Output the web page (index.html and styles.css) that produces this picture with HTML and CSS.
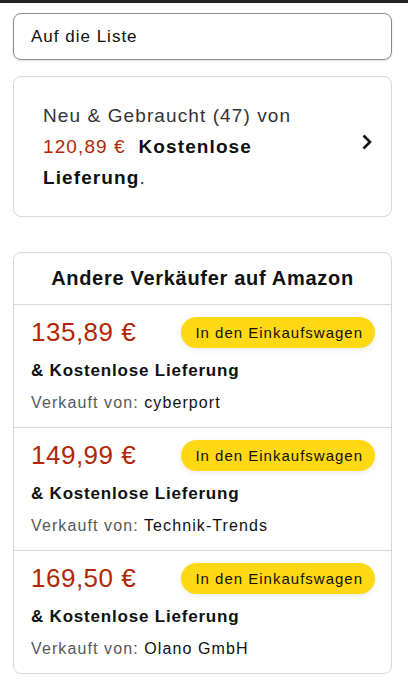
FILE: index.html
```html
<!DOCTYPE html>
<html lang="de">
<head>
  <meta charset="UTF-8">
  <meta name="viewport" content="width=device-width, initial-scale=1.0">
  <title>Angebote</title>
  <link rel="stylesheet" href="styles.css">
</head>
<body>
  <div class="topbar"></div>

  <div class="page">
    <div class="list-box">Auf die Liste</div>

    <a class="offers-card" href="#">
      <p class="offers-text">Neu &amp; Gebraucht (47) von <span class="price-inline">120,89 €</span>&nbsp; <b>Kostenlose</b> <b>Lieferung</b>.</p>
      <svg class="chevron" width="12" height="18" viewBox="0 0 12 18">
        <path d="M2.5 2.5 L9 9 L2.5 15.5" fill="none" stroke="#111" stroke-width="2.6"/>
      </svg>
    </a>

    <div class="sellers">
      <h3 class="sellers-title">Andere Verkäufer auf Amazon</h3>

      <div class="seller">
        <div class="seller-top">
          <span class="price">135,89 €</span>
          <button class="cart-btn" type="button">In den Einkaufswagen</button>
        </div>
        <div class="delivery">&amp; Kostenlose Lieferung</div>
        <div class="sold-by"><span class="label">Verkauft von:</span> cyberport</div>
      </div>

      <div class="seller">
        <div class="seller-top">
          <span class="price">149,99 €</span>
          <button class="cart-btn" type="button">In den Einkaufswagen</button>
        </div>
        <div class="delivery">&amp; Kostenlose Lieferung</div>
        <div class="sold-by"><span class="label">Verkauft von:</span> Technik-Trends</div>
      </div>

      <div class="seller">
        <div class="seller-top">
          <span class="price">169,50 €</span>
          <button class="cart-btn" type="button">In den Einkaufswagen</button>
        </div>
        <div class="delivery">&amp; Kostenlose Lieferung</div>
        <div class="sold-by"><span class="label">Verkauft von:</span> Olano GmbH</div>
      </div>
    </div>
  </div>
</body>
</html>
```

FILE: styles.css
```css
body {
  margin: 0;
  font-family: "Liberation Sans", Arial, sans-serif;
  background-color: #fff;
  color: #0f1111;
}

.topbar {
  height: 3px;
  background-color: #232323;
}

.page {
  padding: 10px 16px 0 13px;
}

.list-box {
  height: 45px;
  border: 1px solid #888c8c;
  border-radius: 8px;
  box-shadow: 0 1px 2px rgba(15, 17, 17, 0.15);
  padding: 0 17px;
  display: flex;
  align-items: center;
  font-size: 17px;
  letter-spacing: 1px;
  color: #0f1111;
}

.offers-card {
  margin-top: 16px;
  height: 139px;
  border: 1px solid #d5d9d9;
  border-radius: 8px;
  display: flex;
  align-items: center;
  justify-content: space-between;
  padding: 0 18px 0 29px;
  text-decoration: none;
  color: #0f1111;
}

.offers-text {
  margin: 0;
  width: 285px;
  font-size: 19px;
  letter-spacing: 1.1px;
  line-height: 31px;
  color: #333;
}

.offers-text b {
  color: #0f1111;
}

.price-inline {
  color: #b12704;
}

.chevron {
  flex-shrink: 0;
  margin-bottom: 10px;
}

.sellers {
  margin-top: 35px;
  border: 1px solid #d5d9d9;
  border-radius: 8px;
}

.sellers-title {
  margin: 0;
  height: 51px;
  display: flex;
  align-items: center;
  justify-content: center;
  font-size: 20px;
  letter-spacing: 0.7px;
  font-weight: bold;
  color: #0f1111;
  border-bottom: 1px solid #d5d9d9;
}

.seller {
  padding: 12px 16px 0 17px;
  height: 110px;
  border-bottom: 1px solid #d5d9d9;
}

.seller:last-child {
  border-bottom: none;
}

.seller-top {
  display: flex;
  justify-content: space-between;
  align-items: center;
}

.price {
  font-size: 26px;
  letter-spacing: 0.5px;
  color: #b12704;
}

.cart-btn {
  background-color: #ffd814;
  border: none;
  border-radius: 16px;
  height: 31px;
  padding: 0 12px 0 14px;
  font-family: "Liberation Sans", Arial, sans-serif;
  font-size: 15px;
  letter-spacing: 1px;
  color: #0f1111;
  box-shadow: 0 2px 5px rgba(213, 217, 217, 0.5);
}

.delivery {
  margin-top: 13px;
  font-size: 17px;
  letter-spacing: 0.8px;
  font-weight: bold;
  color: #0f1111;
}

.sold-by {
  margin-top: 13px;
  font-size: 16px;
  letter-spacing: 1.1px;
  color: #0f1111;
}

.sold-by .label {
  color: #565959;
}
```
